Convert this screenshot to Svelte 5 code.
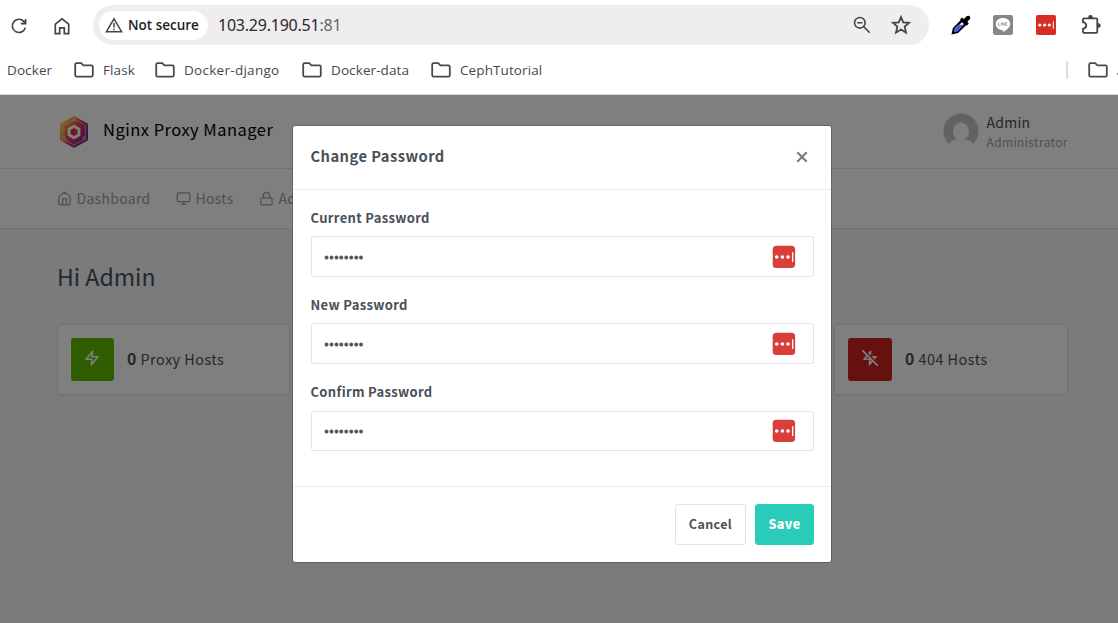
<script>
  const bookmarks = ['Flask', 'Docker-django', 'Docker-data', 'CephTutorial'];
  const fields = ['Current Password', 'New Password', 'Confirm Password'];
</script>

{#snippet folder()}
  <svg class="folder" viewBox="0 0 20 16"><path d="M1.2 2.6Q1.2 1.2 2.6 1.2H7.2L9.4 3.4H17.4Q18.8 3.4 18.8 4.8V13.2Q18.8 14.6 17.4 14.6H2.6Q1.2 14.6 1.2 13.2Z" /></svg>
{/snippet}

{#snippet passkey()}
  <svg class="passkey" viewBox="0 0 24 24"><rect x=".7" y=".7" width="22.4" height="22.4" rx="3.6" fill="#d83f3b" /><g fill="#fff"><circle cx="4.7" cy="12" r="1.8" /><circle cx="10.4" cy="12" r="1.8" /><circle cx="16" cy="12" r="1.8" /><rect x="20" y="7.3" width="1.3" height="9.6" /></g></svg>
{/snippet}

<div class="window">
  <div class="toolbar">
    <svg class="reload" viewBox="0 0 18 18"><path d="M15.3 10.6A6.6 6.6 0 1 1 13.8 4.4L15.5 6.4M15.6 1.9V6.6H10.8" /></svg>
    <svg class="home" viewBox="0 0 18 18"><path d="M2.3 7.2L9 1.8L15.7 7.2V16.6H11.3V10.8H6.7V16.6H2.3Z" /></svg>
    <div class="address">
      <div class="chip">
        <svg viewBox="0 0 18 16"><path d="M9 1.8L16.6 14.7H1.4Z" /><path d="M9 6V10.5M9 11.8V13.3" /></svg>
        <span>Not secure</span>
      </div>
      <div class="url">103.29.190.51<span>:81</span></div>
      <svg class="lens" viewBox="0 0 18 18"><circle cx="6.8" cy="6.8" r="5.3" /><path d="M10.8 10.8L16.7 16.7M4.2 6.8H9.4" /></svg>
      <svg class="star" viewBox="0 0 18 18"><path d="M9 1.8L11 6.6L16.3 7L12.3 10.5L13.5 15.9L9 13.1L4.5 15.9L5.7 10.5L1.7 7L7 6.6Z" /></svg>
    </div>
    <svg class="picker" viewBox="0 0 20 20"><path d="M2 18L3 13.5L11 5.5L14.5 9L6.5 17Z" fill="#fff" stroke="#000" stroke-width="2.4" /><path d="M2.8 17.2L3.6 13.2L7 9.8H13L6.2 16.8Z" fill="#4560dc" /><path d="M9 4.6L11 2.4L13 4L15.5 1.3Q18 .2 19 1.7Q19.8 3.5 18.5 4.6L16.3 6.8L17.8 8.6L15.8 10.8Z" fill="#000" /></svg>
    <svg class="line" viewBox="0 0 20 20"><rect width="20" height="20" rx="2.2" fill="#878787" /><path d="M10 3C14.2 3 17.2 5.6 17.2 9C17.2 12.2 13.5 15 10 17.2C10.3 15.8 10.2 15.3 9.5 15.2C5.6 14.9 2.8 12.3 2.8 9C2.8 5.6 5.8 3 10 3Z" fill="#fff" /><path d="M5.6 7.5V10.5H7M8.2 7.5V10.5M9.5 10.5V7.5L11.3 10.5V7.5M14.2 7.5H12.8V10.5H14.2M12.8 9H14" fill="none" stroke="#878787" stroke-width=".7" /></svg>
    <svg class="lastpass" viewBox="0 0 20 20"><rect width="20" height="20" rx="1.8" fill="#d62d27" /><g fill="#fff"><circle cx="3.8" cy="10" r="1.6" /><circle cx="8.6" cy="10" r="1.6" /><circle cx="13.3" cy="10" r="1.6" /><rect x="16.8" y="6.3" width="1" height="7.4" /></g></svg>
    <svg class="puzzle" viewBox="0 0 20 20"><path d="M3 3.3H15.3Q16.3 3.3 16.3 4.3V16.8Q16.3 17.8 15.3 17.8H3Q2 17.8 2 16.8V13.8Q5.2 13.2 5.2 10.5Q5.2 7.8 2 7.2V4.3Q2 3.3 3 3.3Z" /><path d="M7.2 3V2.3A2.3 2.3 0 0 1 11.8 2.3V3ZM16.6 8.2H17.4A2.3 2.3 0 0 1 17.4 12.8H16.6Z" class="solid" /></svg>
  </div>

  <div class="bookmarks">
    <span class="first">Docker</span>
    {#each bookmarks as name, i}
      <div class="bookmark b{i}">{@render folder()}<span>{name}</span></div>
    {/each}
    <div class="overflow"><i></i>{@render folder()}<b></b></div>
  </div>

  <div class="page">
    <header>
      <svg class="logo" viewBox="0 0 30 34">
        <defs>
          <linearGradient id="warm" x1="0" y1=".1" x2="1" y2=".75"><stop offset="0" stop-color="#ffe03c" /><stop offset=".35" stop-color="#f28a3c" /><stop offset=".62" stop-color="#b8307c" /><stop offset="1" stop-color="#5d2f8e" /></linearGradient>
          <linearGradient id="hot" x1="0" y1="0" x2="1" y2="1"><stop offset="0" stop-color="#f5a03a" /><stop offset=".5" stop-color="#e5363c" /><stop offset="1" stop-color="#a02078" /></linearGradient>
        </defs>
        <path d="M15 1L29 8.8V25.2L15 33L1 25.2V8.8Z" fill="url(#warm)" />
        <path d="M15 4L26.3 10.3V23.7L15 30L3.7 23.7V10.3Z" fill="none" stroke="#f3d5dd" stroke-width=".6" />
        <path d="M15 6.5L24 11.7V22.3L15 27.5L6 22.3V11.7Z" fill="url(#hot)" />
        <path d="M15 9.6L21.4 13.3V20.7L15 24.4L8.6 20.7V13.3Z" fill="#fff" />
        <path d="M15 13L18.5 15V19L15 21L11.5 19V15Z" fill="#e23340" />
        <g fill="#9c2a78" stroke="#f3d5dd" stroke-width=".8"><circle cx="15" cy="4.8" r="1.5" fill="#ef9a45" /><circle cx="4.8" cy="23.3" r="1.5" fill="#e0653c" /><circle cx="25.2" cy="23.3" r="1.5" /></g>
      </svg>
      <span class="brand">Nginx Proxy Manager</span>
      <svg class="avatar" viewBox="0 0 36 36"><defs><clipPath id="disc"><path d="M6 31A17.6 17.6 0 1 1 30 31Z" /></clipPath></defs><g clip-path="url(#disc)"><rect width="36" height="36" fill="#c5c5c5" /><ellipse cx="18" cy="18.5" rx="8" ry="9" fill="#fff" /><path d="M5 36Q5 28 13 26.5H23Q31 28 31 36Z" fill="#fff" /></g></svg>
      <div class="who"><span>Admin</span><small>Administrator</small></div>
    </header>
    <nav>
      <div class="n0"><svg viewBox="0 0 24 24"><path d="M3 9l9-7 9 7v11a2 2 0 0 1-2 2H5a2 2 0 0 1-2-2z" /><path d="M9 22V12h6v10" /></svg><span>Dashboard</span></div>
      <div class="n1"><svg viewBox="0 0 24 24"><rect x="2" y="3" width="20" height="14" rx="2" /><path d="M8 21h8M12 17v4" /></svg><span>Hosts</span></div>
      <div class="n2"><svg viewBox="0 0 24 24"><rect x="3" y="11" width="18" height="11" rx="2" /><path d="M7 11V7a5 5 0 0 1 10 0v4" /></svg><span>Access Lists</span></div>
    </nav>
    <main>
      <h1>Hi Admin</h1>
      <div class="cards">
        <div class="card">
          <div class="stamp green"><svg viewBox="0 0 24 24"><path d="M13 2L3 14h9l-1 8 10-12h-9l1-8z" /></svg></div>
          <span><b>0</b> Proxy Hosts</span>
        </div>
        <div class="card">
          <div class="stamp red"><svg viewBox="0 0 24 24"><path d="M12.4 6.8L13 2l-2.4 2.9M18.6 12.9L21 10h-5.3M8 8l-5 6h9l-1 8 5-6M1 1l22 22" /></svg></div>
          <span><b>0</b> 404 Hosts</span>
        </div>
      </div>
    </main>
    <div class="backdrop">
      <div class="modal">
        <div class="title"><span>Change Password</span><svg viewBox="0 0 12 12"><path d="M1.3 1.3L10.7 10.7M10.7 1.3L1.3 10.7" /></svg></div>
        <div class="form">
          {#each fields as label}
            <div class="field">
              <label for={label}>{label}</label>
              <div class="input" id={label}><span>••••••••</span>{@render passkey()}</div>
            </div>
          {/each}
        </div>
        <div class="actions"><button>Cancel</button><button class="save">Save</button></div>
      </div>
    </div>
  </div>
</div>

<style>
  :global(body) { overflow: hidden; }
  * { box-sizing: border-box; }
  svg { display: block; flex: none; fill: none; }
  .window { width: 1118px; height: 623px; overflow: hidden; display: flex; flex-direction: column; background: #fff; font-family: "Open Sans", sans-serif; }
  .toolbar { height: 50px; display: flex; align-items: center; padding-left: 10px; flex: none; stroke: #444; stroke-width: 1.7; }
  .reload, .home { width: 18px; height: 18px; margin-top: 1px; }
  .home { margin-left: 25px; }
  .address { width: 836px; height: 40px; margin-left: 22px; border-radius: 20px; background: #efedee; display: flex; align-items: center; padding-left: 6px; }
  .chip { width: 109px; height: 29px; border-radius: 15px; background: #fff; display: flex; align-items: center; padding-left: 6px; gap: 5px; color: #1f1f1f; font-size: 13.5px; font-weight: 600; white-space: nowrap; }
  .chip svg { width: 18px; height: 16px; stroke-width: 1.5; }
  .url { margin-left: 10px; width: 635px; font-family: "Noto Sans", sans-serif; font-size: 16px; letter-spacing: -.23px; color: #28282c; }
  .url span { color: #666; }
  .lens { width: 18px; height: 18px; stroke-width: 1.6; }
  .star { width: 20px; height: 20px; margin-left: 20px; stroke-width: 1.6; }
  .picker, .line, .lastpass, .puzzle { width: 20px; height: 20px; stroke: none; }
  .picker { margin-left: 22px; }
  .line { margin-left: 22.4px; }
  .lastpass { margin-left: 23px; }
  .puzzle { margin-left: 24.6px; margin-top: -1px; stroke: #444; stroke-width: 1.8; }
  .puzzle .solid { fill: #444; stroke: none; }
  .bookmarks { height: 45px; border-bottom: 1px solid #ddd; display: flex; align-items: center; padding: 0 0 5px 7px; color: #484848; font-size: 13.5px; letter-spacing: .1px; white-space: nowrap; flex: none; }
  .first { width: 67px; }
  .bookmark { display: flex; align-items: center; gap: 9px; }
  .b0 { width: 81px; } .b1 { width: 147px; letter-spacing: .28px; } .b2 { width: 129px; }
  .folder { width: 20px; height: 16px; stroke: #4a4a4a; stroke-width: 1.8; }
  .overflow { margin-left: auto; display: flex; align-items: center; }
  .overflow i { width: 2px; height: 18px; margin-right: 20px; background: #ddd; }
  .overflow b { width: 1px; height: 2px; background: #d08030; margin: 8px 0 0 9px; }
  .page { position: relative; flex: 1; background: #f5f7fb; color: #495057; font-family: "Noto Sans CJK SC", sans-serif; }
  header { height: 74px; border-bottom: 1px solid #dee2e8; background: #fff; display: flex; align-items: center; padding-left: 59px; }
  .logo { width: 30px; height: 34px; }
  .brand { margin-left: 14px; width: 839.5px; color: #000; font-size: 16.5px; letter-spacing: .48px; line-height: 24px; margin-top: -5px; }
  .avatar { width: 36px; height: 36px; margin-top: -1px; }
  .who { margin: 0 0 0 8px; display: flex; flex-direction: column; font-size: 14px; letter-spacing: .25px; line-height: 20px; }
  .who small { color: #9aa0ac; font-size: 12px; letter-spacing: .35px; line-height: 19px; }
  nav { height: 60px; border-bottom: 1px solid #dee2e8; background: #fff; display: flex; align-items: center; padding-left: 57px; color: #9aa0ac; font-size: 14px; letter-spacing: .3px; line-height: 20px; white-space: nowrap; }
  nav div { display: flex; align-items: center; gap: 4.5px; }
  nav span { margin-top: -2px; }
  nav svg { width: 15px; height: 15px; stroke: currentColor; stroke-width: 2; stroke-linejoin: round; }
  .n0 { width: 119px; } .n1 { width: 83px; }
  main { padding: 31px 50px 0 57px; }
  h1 { margin: 0; font-size: 23.1px; font-weight: 400; line-height: 32px; }
  .cards { margin-top: 32px; display: flex; justify-content: space-between; }
  .card { width: 234px; height: 71px; border: 1px solid #dee2eb; border-radius: 3px; background: #fff; box-shadow: 0 1px 2px rgba(0,0,0,.05); display: flex; align-items: center; padding-left: 13px; gap: 13px; font-size: 14.4px; letter-spacing: .48px; }
  .card:first-child { width: 233px; }
  .card span { margin-top: -2px; }
  .card b { font-size: 15.8px; }
  .stamp { width: 43px; height: 43px; border-radius: 3px; display: grid; place-items: center; }
  .stamp svg { width: 16px; height: 16px; stroke: #fff; stroke-width: 2.3; margin: -3px 0 0 -1px; stroke-linecap: round; stroke-linejoin: round; }
  .green { background: #5eba00; } .red { width: 44px; background: #cd201f; }
  .backdrop { position: absolute; inset: 0; background: rgba(0,0,0,.5); padding: 30px 0 0 292px; }
  .modal { width: 540px; height: 438px; border: 1px solid rgba(0,0,0,.2); background: #fff; background-clip: padding-box; border-radius: 3px; display: flex; flex-direction: column; }
  .title { height: 64px; border-bottom: 1px solid #e9ecef; display: flex; align-items: center; justify-content: space-between; padding: 0 23.5px 2px 17.5px; font-size: 14.7px; letter-spacing: .46px; font-weight: 700; }
  .title span { margin-top: -2px; }
  .title svg { width: 12px; height: 12px; stroke: #7c7c7c; stroke-width: 2.1; }
  .form { height: 297px; border-bottom: 1px solid #e9ecef; padding: 18px 17px 0 18px; }
  .field { height: 87.2px; }
  label { display: block; height: 28px; margin-left: -.5px; font-size: 13px; letter-spacing: .33px; line-height: 20px; font-weight: 700; }
  .input { height: 41px; border: 1px solid #dfe3ec; border-radius: 3px; display: flex; align-items: center; justify-content: space-between; padding: 0 17px 0 12px; }
  .field:last-child .input { height: 40px; margin-top: .6px; }
  .input span { font-family: "Open Sans", sans-serif; font-size: 13px; letter-spacing: .05px; -webkit-text-stroke: .9px #495057; }
  .passkey { width: 24px; height: 24px; }
  .actions { flex: 1; display: flex; justify-content: flex-end; padding: 17px 17px 0; gap: 9px; }
  button { width: 71px; height: 41px; padding: 0 0 2px; border: 1px solid #dfe3ec; border-radius: 3px; background: #fff; color: #495057; font: 700 12.5px "Noto Sans CJK SC", sans-serif; letter-spacing: .4px; }
  .save { width: 59px; border-color: #2bcbba; background: #2bcbba; color: #fff; font-weight: 900; }
</style>
